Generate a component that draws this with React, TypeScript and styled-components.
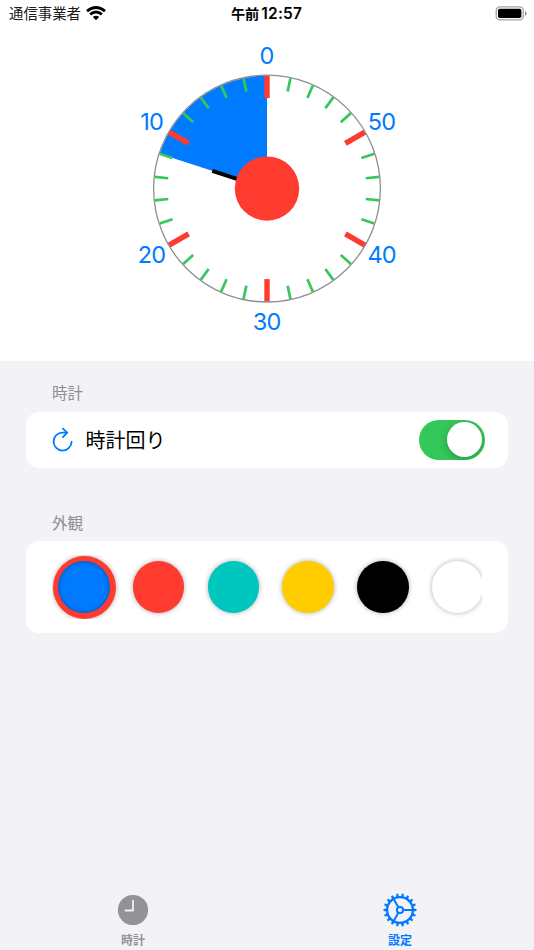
import React, { useState } from "react";
import styled, { createGlobalStyle } from "styled-components";

const BLUE = "#007aff";
const RED = "#ff3b30";
const GREEN = "#34c759";
const GRAY = "#8e8e93";

const GlobalStyle = createGlobalStyle`
  * { box-sizing: border-box; }
  body {
    margin: 0;
    background: #f2f2f7;
    font-family: Inter, "Noto Sans CJK JP", sans-serif;
    color: #000;
  }
  button { font: inherit; border: 0; padding: 0; background: none; cursor: pointer; }
`;

const Screen = styled.div`
  width: 534px;
  height: 950px;
  display: flex;
  flex-direction: column;
  overflow: hidden;
`;

const StatusBar = styled.header`
  height: 27px;
  flex: none;
  display: grid;
  grid-template-columns: 1fr auto 1fr;
  align-items: center;
  padding: 0 7px 0 9px;
  background: #fff;
  line-height: 27px;
`;

const Carrier = styled.div`
  display: flex;
  align-items: center;
  gap: 5px;
  font-size: 14.4px;
  color: #1c1c1c;
`;

const Time = styled.div`
  display: flex;
  gap: 2px;
  margin-right: 3px;
  font-size: 14.2px;
  font-weight: 700;
`;

const Digits = styled.span`
  font-size: 15.5px;
  font-weight: 600;
  letter-spacing: 0.2px;
`;

const BatteryIcon = styled.svg`
  justify-self: end;
  display: block;
`;

const DialSection = styled.section`
  height: 334px;
  flex: none;
  background: #fff;
`;

const DialSvg = styled.svg`
  display: block;
  text {
    font-family: Inter, sans-serif;
    font-size: 23.5px;
    letter-spacing: -0.8px;
    fill: ${BLUE};
    text-anchor: middle;
  }
`;

const Settings = styled.main`
  flex: 1;
  display: flex;
  flex-direction: column;
  padding: 0 26px;
`;

const Heading = styled.h2<{ $space: number }>`
  margin: ${(p) => p.$space}px 0 5.5px 26px;
  height: 24px;
  line-height: 24px;
  font-size: 15.5px;
  font-weight: 400;
  color: ${GRAY};
`;

const Card = styled.div<{ $height: number }>`
  height: ${(p) => p.$height}px;
  display: flex;
  align-items: center;
  padding: 0 23.5px 0 26px;
  border-radius: 13px;
  background: #fff;
`;

const RowLabel = styled.span`
  flex: 1;
  margin-left: 12.5px;
  padding-top: 2px;
  font-size: 20px;
  line-height: 30px;
`;

const Toggle = styled.button<{ $on: boolean }>`
  width: 66px;
  height: 40px;
  padding: 0 2.5px;
  display: flex;
  align-items: center;
  justify-content: ${(p) => (p.$on ? "flex-end" : "flex-start")};
  border-radius: 20px;
  background: ${(p) => (p.$on ? GREEN : "#e9e9ea")};
  overflow: hidden;
`;

const Knob = styled.span`
  width: 35px;
  height: 35px;
  border-radius: 50%;
  background: #fff;
  box-shadow: 0 3px 9px rgba(0, 0, 0, 0.22);
`;

const Swatches = styled.div`
  width: 430px;
  height: 64px;
  display: flex;
  align-items: center;
  gap: 22.7px;
  overflow: hidden;
`;

const Swatch = styled.button<{ $color: string; $selected: boolean }>`
  flex: none;
  width: ${(p) => (p.$selected ? 64 : 52)}px;
  height: ${(p) => (p.$selected ? 64 : 52)}px;
  margin-right: ${(p) => (p.$selected ? -6 : 0)}px;
  display: grid;
  place-items: center;

  &::before {
    content: "";
    grid-area: 1 / 1;
    width: 63px;
    height: 63px;
    border-radius: 50%;
    background: ${RED};
    box-shadow: 0 0 5px rgba(0, 0, 0, 0.33);
    display: ${(p) => (p.$selected ? "block" : "none")};
  }

  &::after {
    content: "";
    grid-area: 1 / 1;
    width: 51.5px;
    height: 51.5px;
    border-radius: 50%;
    background: ${(p) => p.$color};
    box-shadow: ${(p) =>
      p.$selected ? "inset 0 0 5px rgba(0, 0, 0, 0.33)" : "0 0 5px rgba(0, 0, 0, 0.33)"};
  }
`;

const TabBar = styled.nav`
  height: 61px;
  flex: none;
  display: grid;
  grid-template-columns: 1fr 1fr;
`;

const Tab = styled.button<{ $active: boolean }>`
  display: flex;
  flex-direction: column;
  align-items: center;
  padding: 3px 1px 0 0;
  font-size: 12px;
  font-weight: 600;
  line-height: 18px;
  gap: 4px;
  color: ${(p) => (p.$active ? BLUE : "#929297")};
  svg { display: block; }
`;

const polar = (degrees: number, radius: number) => {
  const a = (degrees * Math.PI) / 180;
  return [267 + Math.sin(a) * radius, 161.6 - Math.cos(a) * radius];
};

interface RayProps {
  angle: number;
  from: number;
  to: number;
  color: string;
  width: number;
}

function Ray({ angle, from, to, color, width }: RayProps) {
  const [x1, y1] = polar(angle, from);
  const [x2, y2] = polar(angle, to);
  return <line x1={x1} y1={y1} x2={x2} y2={y2} stroke={color} strokeWidth={width} />;
}

const labels: [string, number, number][] = [
  ["0", 266.6, 37],
  ["50", 381.6, 103],
  ["40", 381.6, 236],
  ["30", 266.6, 303],
  ["20", 151.6, 236],
  ["10", 151.6, 103],
];

function Dial({ minutes }: { minutes: number }) {
  const angle = -minutes * 6;
  const [x, y] = polar(angle, 113);
  return (
    <DialSvg width="534" height="334" viewBox="0 0 534 334">
      <path d={`M267 161.6V48.6A113 113 0 0 0 ${x} ${y}Z`} fill={BLUE} />
      {Array.from({ length: 30 }, (_, i) =>
        i % 5 === 0 ? (
          <Ray key={i} angle={i * 12} from={90.5} to={113} color={RED} width={5.4} />
        ) : (
          <Ray key={i} angle={i * 12} from={99.3} to={112.8} color={GREEN} width={2.7} />
        )
      )}
      <circle cx="267" cy="161.6" r="113.4" fill="none" stroke={GRAY} strokeWidth="1.3" />
      <Ray angle={angle} from={0} to={57.5} color="#000" width={4} />
      <circle cx="267" cy="161.6" r="32.2" fill={RED} />
      {labels.map(([label, lx, ly]) => (
        <text key={label} x={lx} y={ly}>{label}</text>
      ))}
    </DialSvg>
  );
}

function WifiIcon() {
  return (
    <svg width="20" height="15" viewBox="0 0 20 15" fill="none" stroke="#000" strokeWidth="2.8">
      <path d="M1 5.2Q10-2.3 19 5.2M4.1 8.4Q10 3.6 15.9 8.4" />
      <path d="M6.8 11.1Q10 8.3 13.2 11.1L10 14.3Z" fill="#000" stroke="none" />
    </svg>
  );
}

function Battery() {
  return (
    <BatteryIcon width="32" height="15" viewBox="0 0 32 15">
      <rect x="1.2" y=".9" width="27.1" height="13" rx="3.7" fill="none" stroke="#a3a3a3" strokeWidth="1.3" />
      <rect x="3" y="2.8" width="23.4" height="9.3" rx="1.8" />
      <path d="M30 5v5Q31.7 9.2 31.7 7.5T30 5Z" fill="#929292" />
    </BatteryIcon>
  );
}

function ClockwiseIcon() {
  return (
    <svg width="21" height="25" viewBox="0 0 21 25" fill="none" stroke={BLUE} strokeWidth="1.8" strokeLinecap="round" strokeLinejoin="round">
      <path d="M19.6 14.6A9 9 0 1 1 10.6 5.6H15" />
      <path d="M10.9 1.7L15.2 5.7L10.9 10.1" />
    </svg>
  );
}

function ClockIcon() {
  return (
    <svg width="36" height="36" viewBox="0 0 36 36">
      <circle cx="18" cy="18" r="15.1" fill="#929297" />
      <path d="M18 8.7V18.5H10.5" fill="none" stroke="#f2f2f7" strokeWidth="1.8" strokeLinecap="round" strokeLinejoin="round" />
    </svg>
  );
}

function GearIcon() {
  return (
    <svg width="36" height="36" viewBox="0 0 36 36" fill="none" stroke={BLUE} strokeWidth="2">
      {Array.from({ length: 18 }, (_, i) => (
        <path key={i} d="M16.5 5L17.1 1.5H18.9L19.5 5Z" fill={BLUE} stroke="none" transform={`rotate(${i * 20 + 10} 18 18)`} />
      ))}
      <circle cx="18" cy="18" r="12.9" strokeWidth="2.3" />
      <circle cx="18" cy="18" r="3.1" />
      <path d="M21 18H31M16.5 15.4L11.5 6.8M16.5 20.6L11.5 29.2" />
    </svg>
  );
}

const colors = [BLUE, RED, "#00c7be", "#ffcc00", "#000000", "#ffffff"];

export default function App() {
  const [clockwise, setClockwise] = useState(true);
  const [selected, setSelected] = useState(0);
  const [tab, setTab] = useState(1);
  return (
    <>
      <GlobalStyle />
      <Screen>
        <StatusBar>
          <Carrier>通信事業者<WifiIcon /></Carrier>
          <Time>午前<Digits>12:57</Digits></Time>
          <Battery />
        </StatusBar>
        <DialSection><Dial minutes={12} /></DialSection>
        <Settings>
          <Heading $space={21}>時計</Heading>
          <Card $height={56.5}>
            <ClockwiseIcon />
            <RowLabel>時計回り</RowLabel>
            <Toggle $on={clockwise} role="switch" aria-checked={clockwise} onClick={() => setClockwise(!clockwise)}>
              <Knob />
            </Toggle>
          </Card>
          <Heading $space={43.5}>外観</Heading>
          <Card $height={92}>
            <Swatches>
              {colors.map((color, i) => (
                <Swatch key={color} $color={color} $selected={i === selected} onClick={() => setSelected(i)} />
              ))}
            </Swatches>
          </Card>
        </Settings>
        <TabBar>
          <Tab $active={tab === 0} onClick={() => setTab(0)}><ClockIcon />時計</Tab>
          <Tab $active={tab === 1} onClick={() => setTab(1)}><GearIcon />設定</Tab>
        </TabBar>
      </Screen>
    </>
  );
}
